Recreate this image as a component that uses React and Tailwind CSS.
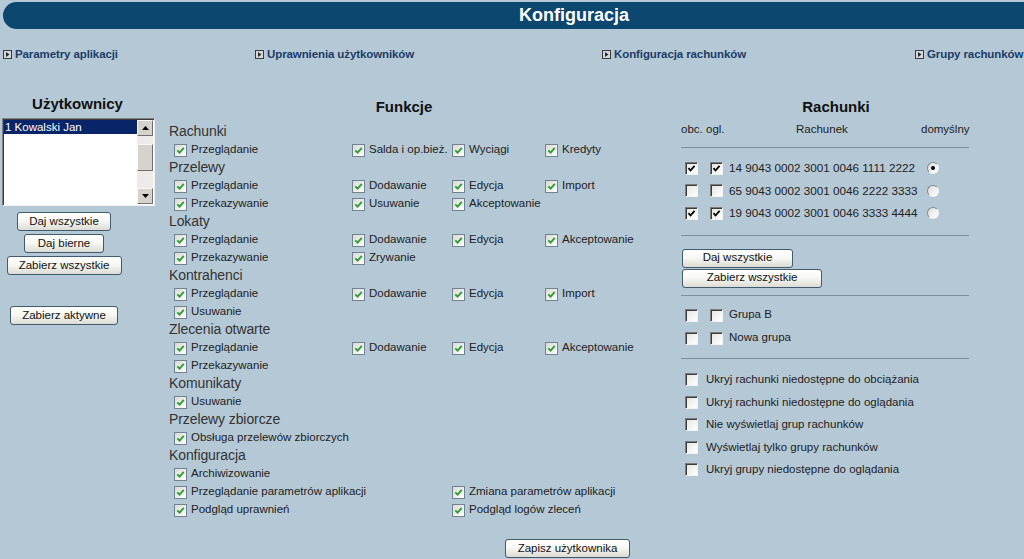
import React from "react";

function NavIcon() {
  return (
    <svg width="9" height="9" viewBox="0 0 9 9" className="shrink-0">
      <rect x="0" y="0" width="9" height="9" fill="#3a3a3a" />
      <rect x="1" y="1" width="7" height="7" fill="#d2d8dd" />
      <path d="M3 2 L6.5 4.5 L3 7 Z" fill="#2a2a2a" />
    </svg>
  );
}

function XPCheck() {
  return (
    <span className="inline-flex h-[13px] w-[13px] shrink-0 items-center justify-center border border-[#6f8393] bg-linear-to-br from-[#d9dad4] to-white">
      <svg width="9" height="9" viewBox="0 0 9 9">
        <path d="M1.3 4.3 L3.6 6.6 L7.8 1.8" stroke="#2f9e33" strokeWidth="1.9" fill="none" />
      </svg>
    </span>
  );
}

function Item({ label, span }) {
  return (
    <div className={span ? "col-span-2 flex h-[18px] items-center gap-[4px]" : "flex h-[18px] items-center gap-[4px]"}>
      <XPCheck />
      <span className="whitespace-nowrap text-[11.5px] text-[#222]">{label}</span>
    </div>
  );
}

function Row({ items }) {
  return (
    <div className="grid grid-cols-[178px_100px_93px_130px] pl-[5px]">
      {items.map((l, i) => (
        <Item key={i} label={l} />
      ))}
    </div>
  );
}

function Head({ children }) {
  return (
    <div className="h-[18px] pb-[2px] text-[14px] leading-[16px] tracking-[-0.1px] text-[#333]">{children}</div>
  );
}

function ClassicCb({ checked }) {
  return (
    <span className="inline-flex h-[13px] w-[13px] shrink-0 items-center justify-center border border-t-[#7b7b7b] border-l-[#7b7b7b] border-b-[#f2f2f2] border-r-[#f2f2f2] bg-linear-to-br from-[#e4e4e0] to-white shadow-[inset_1px_1px_0_#3c3c3c]">
      {checked && (
        <svg width="9" height="9" viewBox="0 0 9 9">
          <path d="M1.5 4.2 L3.5 6.5 L7.6 1.8" stroke="#000" strokeWidth="1.8" fill="none" />
        </svg>
      )}
    </span>
  );
}

function Radio({ checked }) {
  return (
    <span className="inline-flex h-[12px] w-[12px] items-center justify-center rounded-full border border-t-[#8a8a8a] border-l-[#8a8a8a] border-b-[#f4f4f4] border-r-[#f4f4f4] bg-linear-to-br from-[#dedede] to-white">
      {checked && <span className="h-[4px] w-[4px] rounded-full bg-black" />}
    </span>
  );
}

function Btn({ children, w }) {
  return (
    <button
      className={
        "block h-[19px] rounded-[3px] border border-[#405a70] bg-linear-to-b from-white via-[#f6f6f2] to-[#dcdcd4] px-0 text-[11.5px] leading-none text-[#111] " +
        w
      }
    >
      {children}
    </button>
  );
}

function Line() {
  return <div className="h-px w-[288px] bg-[#7f8e99]" />;
}

export default function App() {
  return (
    <div className="h-[559px] w-[1024px] overflow-hidden bg-[#b5c8d6] font-['Liberation_Sans',Arial,sans-serif] text-[#222]">
      {/* header bar */}
      <div className="ml-[3px] mt-[2px] h-[27px] rounded-l-[14px] bg-[#0b476f] pl-[516px] text-[18px] font-bold leading-[27px] text-white">
        Konfiguracja
      </div>

      {/* nav */}
      <div className="mt-[18px] flex h-[14px] items-center pl-[3px] text-[11.5px] font-bold leading-[14px] tracking-[-0.1px] text-[#1c3d68]">
        <div className="flex w-[252px] items-center gap-[3px]">
          <NavIcon />
          <span>Parametry aplikacji</span>
        </div>
        <div className="flex w-[347px] items-center gap-[3px]">
          <NavIcon />
          <span>Uprawnienia użytkowników</span>
        </div>
        <div className="flex w-[313px] items-center gap-[3px]">
          <NavIcon />
          <span>Konfiguracja rachunków</span>
        </div>
        <div className="flex items-center gap-[3px] whitespace-nowrap">
          <NavIcon />
          <span>Grupy rachunków</span>
        </div>
      </div>

      {/* main */}
      <div className="mt-[34px] flex">
        {/* left column */}
        <div className="w-[169px] shrink-0">
          <div className="w-[155px] text-center text-[15px] font-bold leading-[18px] text-[#111]">Użytkownicy</div>
          <div className="ml-[2px] mt-[5px] flex h-[88px] w-[153px] border border-t-[#808080] border-l-[#808080] border-b-[#f0f0f0] border-r-[#f0f0f0] bg-white shadow-[inset_1px_1px_0_#3a3a3a]">
            <div className="flex-1 pl-[1px] pt-[1px]">
              <div className="h-[14px] bg-[#0a246a] pl-[1px] text-[11.5px] leading-[14px] text-white">1 Kowalski Jan</div>
            </div>
            <div className="mr-[1px] mt-[1px] mb-[1px] flex w-[16px] flex-col bg-[#ecebe7]">
              <div className="flex h-[16px] items-center justify-center border border-t-[#f8f8f8] border-l-[#f8f8f8] border-b-[#6f6f6f] border-r-[#6f6f6f] bg-[#d6d3cc]">
                <svg width="7" height="4" viewBox="0 0 7 4"><path d="M0 4 L3.5 0 L7 4 Z" fill="#000" /></svg>
              </div>
              <div className="mt-[8px] h-[27px] border border-t-[#f8f8f8] border-l-[#f8f8f8] border-b-[#6f6f6f] border-r-[#6f6f6f] bg-[#d6d3cc]" />
              <div className="flex-1" />
              <div className="flex h-[16px] items-center justify-center border border-t-[#f8f8f8] border-l-[#f8f8f8] border-b-[#6f6f6f] border-r-[#6f6f6f] bg-[#d6d3cc]">
                <svg width="7" height="4" viewBox="0 0 7 4"><path d="M0 0 L3.5 4 L7 0 Z" fill="#000" /></svg>
              </div>
            </div>
          </div>
          <div className="mt-[6px] flex w-[128px] flex-col items-center gap-[3px]">
            <Btn w="w-[94px]">Daj wszystkie</Btn>
            <Btn w="w-[80px]">Daj bierne</Btn>
            <Btn w="w-[115px]">Zabierz wszystkie</Btn>
            <div className="mt-[28px] flex">
              <Btn w="w-[108px]">Zabierz aktywne</Btn>
            </div>
          </div>
        </div>

        {/* middle column */}
        <div className="mt-[3px] w-[512px] shrink-0">
          <div className="w-[470px] text-center text-[15px] font-bold leading-[18px] text-[#111]">Funkcje</div>
          <div className="mt-[7px]">
            <Head>Rachunki</Head>
            <Row items={["Przeglądanie", "Salda i op.bież.", "Wyciągi", "Kredyty"]} />
            <Head>Przelewy</Head>
            <Row items={["Przeglądanie", "Dodawanie", "Edycja", "Import"]} />
            <Row items={["Przekazywanie", "Usuwanie", "Akceptowanie"]} />
            <Head>Lokaty</Head>
            <Row items={["Przeglądanie", "Dodawanie", "Edycja", "Akceptowanie"]} />
            <Row items={["Przekazywanie", "Zrywanie"]} />
            <Head>Kontrahenci</Head>
            <Row items={["Przeglądanie", "Dodawanie", "Edycja", "Import"]} />
            <Row items={["Usuwanie"]} />
            <Head>Zlecenia otwarte</Head>
            <Row items={["Przeglądanie", "Dodawanie", "Edycja", "Akceptowanie"]} />
            <Row items={["Przekazywanie"]} />
            <Head>Komunikaty</Head>
            <Row items={["Usuwanie"]} />
            <Head>Przelewy zbiorcze</Head>
            <Row items={["Obsługa przelewów zbiorczych"]} />
            <Head>Konfiguracja</Head>
            <Row items={["Archiwizowanie"]} />
            <div className="grid grid-cols-[178px_100px_200px] pl-[5px]">
              <Item label="Przeglądanie parametrów aplikacji" span />
              <Item label="Zmiana parametrów aplikacji" />
            </div>
            <div className="grid grid-cols-[178px_100px_200px] pl-[5px]">
              <Item label="Podgląd uprawnień" span />
              <Item label="Podgląd logów zleceń" />
            </div>
          </div>
          <div className="ml-[336px] mt-[20px] flex">
            <Btn w="w-[125px]">Zapisz użytkownika</Btn>
          </div>
        </div>

        {/* right column */}
        <div className="mt-[3px] flex-1 text-[11.5px]">
          <div className="w-[310px] text-center text-[15px] font-bold leading-[18px] text-[#111]">Rachunki</div>
          <div className="mt-[6px] flex h-[14px] items-center leading-[14px] text-[#222]">
            <span className="w-[25px]">obc.</span>
            <span className="w-[90px]">ogl.</span>
            <span className="w-[125px]">Rachunek</span>
            <span>domyślny</span>
          </div>
          <div className="mt-[11px]"><Line /></div>
          <div className="mt-[9px]">
            {[
              ["14 9043 0002 3001 0046 1111 2222", true, true],
              ["65 9043 0002 3001 0046 2222 3333", false, false],
              ["19 9043 0002 3001 0046 3333 4444", true, false],
            ].map(([num, ch, def], i) => (
              <div key={i} className="flex h-[22.5px] w-[288px] items-center pl-[4px]">
                <ClassicCb checked={ch} />
                <span className="ml-[12px] inline-flex"><ClassicCb checked={ch} /></span>
                <span className="ml-[6px] w-[198px] whitespace-nowrap text-[11.7px]">{num}</span>
                <Radio checked={def} />
              </div>
            ))}
          </div>
          <div className="mt-[10px]"><Line /></div>
          <div className="ml-[1px] mt-[13px] flex flex-col gap-[1px]">
            <Btn w="w-[111px]">Daj wszystkie</Btn>
            <Btn w="w-[140px]">Zabierz wszystkie</Btn>
          </div>
          <div className="mt-[7px]"><Line /></div>
          <div className="mt-[8px]">
            {["Grupa B", "Nowa grupa"].map((g) => (
              <div key={g} className="flex h-[23px] items-center pl-[4px]">
                <ClassicCb />
                <span className="ml-[12px] inline-flex"><ClassicCb /></span>
                <span className="ml-[6px]">{g}</span>
              </div>
            ))}
          </div>
          <div className="mt-[8px]"><Line /></div>
          <div className="mt-[10px]">
            {[
              "Ukryj rachunki niedostępne do obciążania",
              "Ukryj rachunki niedostępne do oglądania",
              "Nie wyświetlaj grup rachunków",
              "Wyświetlaj tylko grupy rachunków",
              "Ukryj grupy niedostępne do oglądania",
            ].map((t) => (
              <div key={t} className="flex h-[22.5px] items-center pl-[4px]">
                <ClassicCb />
                <span className="ml-[8px] whitespace-nowrap">{t}</span>
              </div>
            ))}
          </div>
        </div>
      </div>
    </div>
  );
}
